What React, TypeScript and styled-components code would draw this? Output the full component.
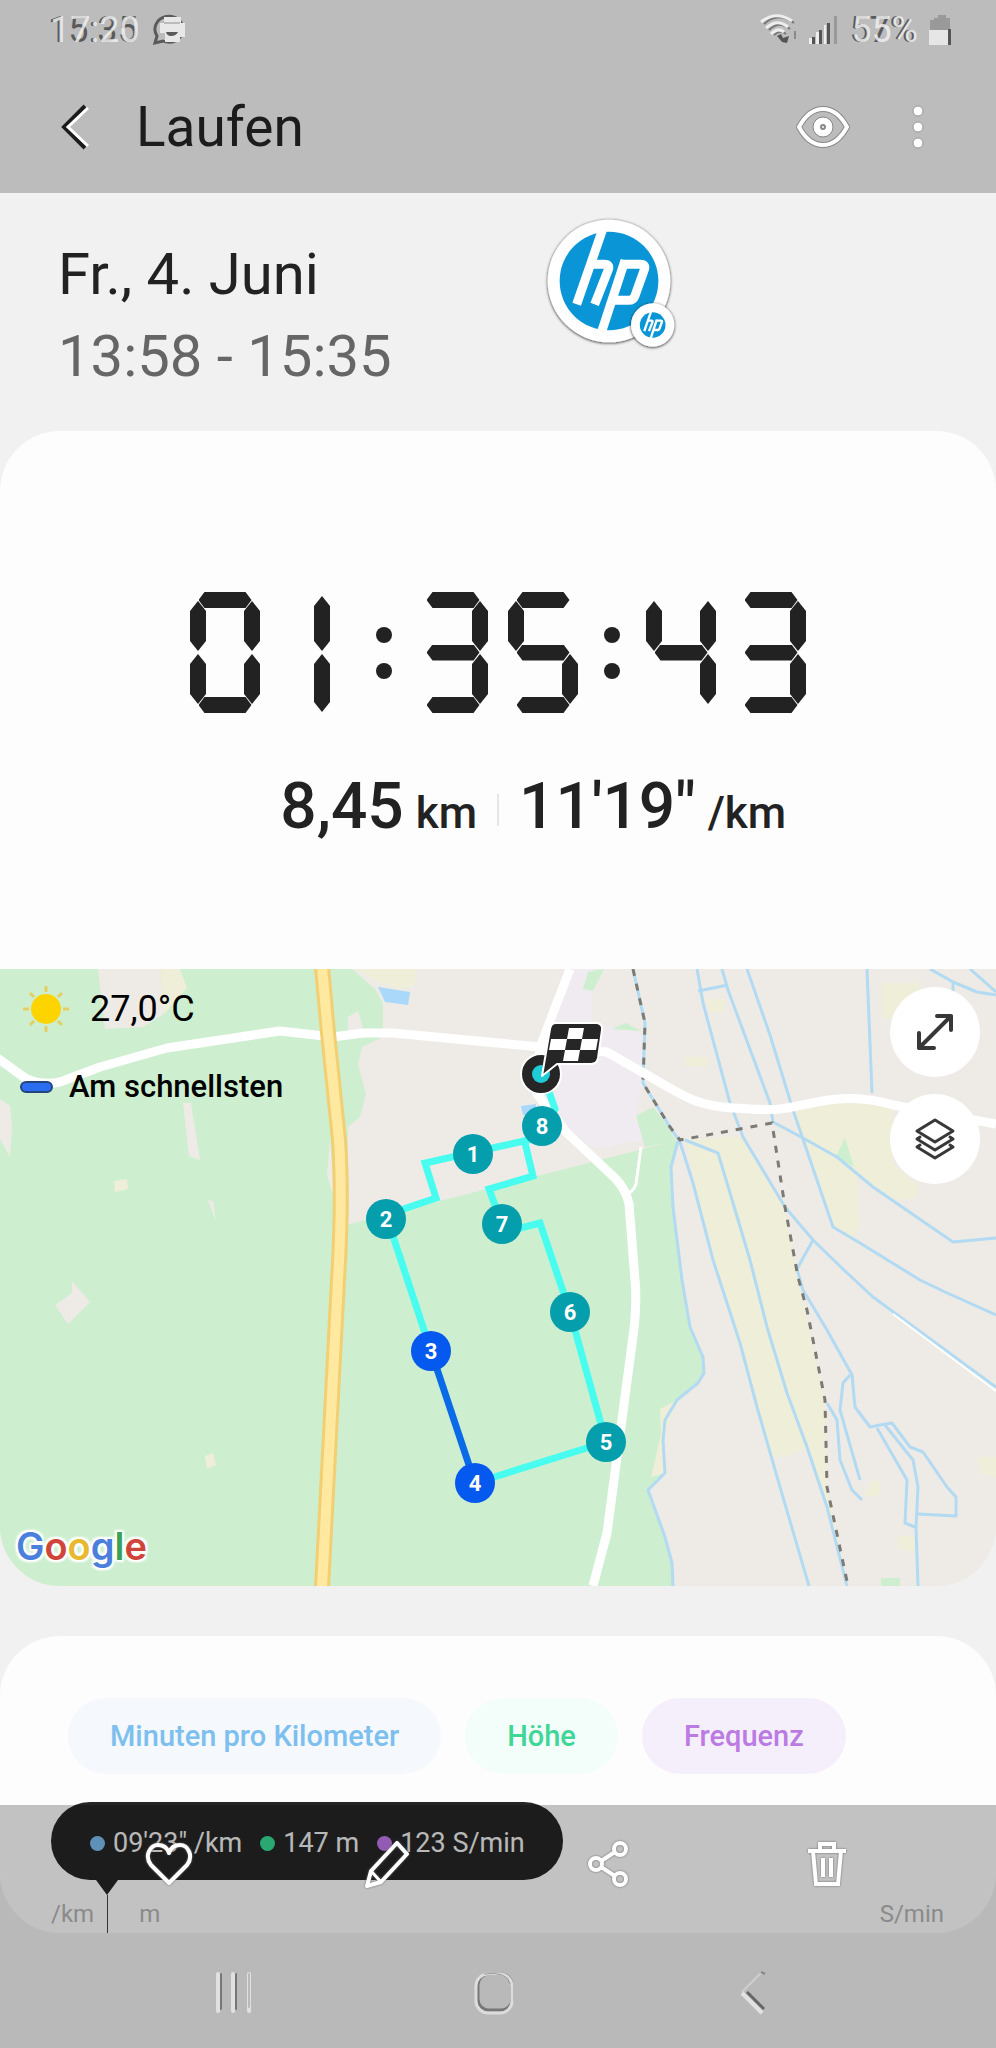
import React from 'react';
import styled, { createGlobalStyle } from 'styled-components';

const GlobalStyle = createGlobalStyle`
  * { box-sizing: border-box; }
  body {
    margin: 0;
    background: #f1f1f1;
    font-family: Roboto, "Liberation Sans", sans-serif;
    color: #222;
  }
  button { border: 0; padding: 0; background: none; font: inherit; cursor: pointer; }
  svg { display: block; }
`;

const Page = styled.div`
  min-height: 100vh;
  padding-bottom: 115px;
`;

/* Header */

const Header = styled.header`
  background: #bcbcbc;
`;

const StatusBar = styled.div`
  display: flex;
  align-items: center;
  height: 60px;
  padding: 0 44px 0 48px;
  font-size: 36px;
  line-height: 42px;
`;

const Ghosted = styled.span`
  display: grid;
`;

const GhostLayer = styled.span<{ $light?: boolean }>`
  grid-area: 1 / 1;
  margin-left: ${p => (p.$light ? '2px' : '0')};
  color: ${p => (p.$light ? 'rgba(240, 240, 240, 0.85)' : '#5a5a5a')};
`;

const StatusIcons = styled.div`
  display: flex;
  align-items: center;
  gap: 10px;
  margin-left: auto;
`;

const ChatIcon = styled.svg`
  margin-left: 12px;
`;

const AppBar = styled.div`
  display: flex;
  align-items: center;
  height: 133px;
  padding: 0 48px 0 46px;
`;

const IconButton = styled.button`
  display: grid;
  place-items: center;
  width: 60px;
  height: 60px;
`;

const Title = styled.h1`
  flex: 1;
  margin: 0 0 0 30px;
  font-size: 55px;
  line-height: 64px;
  font-weight: 400;
  color: #1c1c1c;
`;

const AppActions = styled.div`
  display: flex;
  gap: 35px;
`;

/* Date */

const DateBlock = styled.section`
  position: relative;
  padding: 40px 58px 34px;
  font-size: 58px;
  line-height: 82px;
`;

const DateLine = styled.div<{ $muted?: boolean }>`
  color: ${p => (p.$muted ? '#666' : '#222')};
`;

const FloatingBubble = styled.button`
  position: absolute;
  top: 20px;
  left: calc(50% + 43px);
`;

/* Summary */

const Summary = styled.section`
  display: flex;
  flex-direction: column;
  gap: 56px;
  padding: 161px 0 118px;
  background: #fdfdfd;
  border-radius: 60px 60px 0 0;
`;

const Clock = styled.div`
  display: flex;
  justify-content: center;
`;

const Digit = styled.span`
  display: grid;
  width: 70px;
  height: 121px;
  & + & { margin-left: 20px; }
`;

type SegmentName = 'a' | 'b' | 'c' | 'd' | 'e' | 'f' | 'g' | 'i' | 'j';

const segmentPlace: Record<SegmentName, string> = {
  a: 'align-self: start; justify-self: center;',
  g: 'align-self: center; justify-self: center;',
  d: 'align-self: end; justify-self: center;',
  f: 'align-self: start; justify-self: start; margin-top: 9px;',
  b: 'align-self: start; justify-self: end; margin-top: 9px;',
  e: 'align-self: end; justify-self: start; margin-bottom: 9px;',
  c: 'align-self: end; justify-self: end; margin-bottom: 9px;',
  i: 'align-self: start; height: 55px; margin: 4px 0 0 34px;',
  j: 'align-self: end; height: 58px; margin: 0 0 1px 34px;',
};

const Segment = styled.span<{ $name: SegmentName }>`
  grid-area: 1 / 1;
  background: #222;
  ${p =>
    'adg'.includes(p.$name)
      ? 'width: 53px; height: 16px; clip-path: polygon(0 50%, 6px 0, 47px 0, 100% 50%, 47px 100%, 6px 100%);'
      : 'width: 16px; height: 50px; clip-path: polygon(50% 0, 100% 10px, 100% calc(100% - 10px), 50% 100%, 0 calc(100% - 10px), 0 10px);'}
  ${p => segmentPlace[p.$name]}
`;

const Colon = styled.span`
  display: flex;
  flex-direction: column;
  justify-content: center;
  gap: 20px;
  margin: 0 26px;
`;

const ColonDot = styled.span`
  width: 16px;
  height: 16px;
  border-radius: 50%;
  background: #222;
`;

const Stats = styled.div`
  display: grid;
  grid-template-columns: 1fr 2px 1fr;
  column-gap: 20px;
  align-items: center;
  line-height: 76px;
  font-weight: 500;
`;

const Stat = styled.div<{ $right?: boolean }>`
  display: flex;
  align-items: baseline;
  gap: 12px;
  justify-content: ${p => (p.$right ? 'flex-end' : 'flex-start')};
`;

const StatValue = styled.span`
  font-size: 64px;
`;

const StatUnit = styled.span`
  font-size: 44px;
`;

const Divider = styled.span`
  height: 32px;
  background: #e6e6e6;
`;

/* Map */

const MapPanel = styled.section`
  position: relative;
  height: 617px;
  overflow: hidden;
  border-radius: 0 0 60px 60px;
  background: #eeebe6;
`;

const MapCanvas = styled.svg`
  width: 100%;
  height: 100%;
`;

const PinLabel = styled.text`
  font: 700 22px Roboto, sans-serif;
  fill: #fff;
  text-anchor: middle;
`;

const MapInfo = styled.div`
  position: absolute;
  top: 16px;
  left: 20px;
  display: flex;
  flex-direction: column;
  gap: 36px;
  color: #000;
`;

const Weather = styled.div`
  display: flex;
  align-items: center;
  gap: 18px;
  font-size: 36px;
  line-height: 42px;
`;

const Legend = styled.div`
  display: flex;
  align-items: center;
  gap: 16px;
  font-size: 31px;
  line-height: 36px;
  font-weight: 500;
`;

const LegendMark = styled.span`
  width: 33px;
  height: 12px;
  border: 2px solid #24447c;
  border-radius: 6px;
  background: #2b6df0;
`;

const MapButtons = styled.div`
  position: absolute;
  top: 18px;
  right: 16px;
  display: flex;
  flex-direction: column;
  gap: 17px;
`;

const RoundButton = styled.button`
  display: grid;
  place-items: center;
  width: 90px;
  height: 90px;
  border-radius: 50%;
  background: #fff;
`;

const MapBrand = styled.div`
  position: absolute;
  left: 16px;
  bottom: 17px;
  font: 600 38px/46px Inter, sans-serif;
  text-shadow: 0 0 3px #fff, 2px 2px 2px #fff, -2px -2px 2px #fff, 2px -2px 2px #fff, -2px 2px 2px #fff;
`;

const BrandLetter = styled.span<{ $color: string }>`
  color: ${p => p.$color};
`;

/* Chart card */

const ChartCard = styled.section`
  margin-top: 50px;
  padding-top: 62px;
  background: #fdfdfd;
  border-radius: 60px;
`;

const Chips = styled.div`
  display: flex;
  gap: 24px;
  padding: 0 68px;
  margin-bottom: 28px;
`;

const Chip = styled.button<{ $color: string; $background: string }>`
  height: 76px;
  padding: 0 42px;
  border-radius: 38px;
  font-size: 29px;
  font-weight: 500;
  white-space: nowrap;
  color: ${p => p.$color};
  background: ${p => p.$background};
`;

const Tooltip = styled.div`
  display: flex;
  align-items: center;
  gap: 18px;
  width: max-content;
  height: 78px;
  margin-left: 51px;
  padding: 4px 38px 0 39px;
  border-radius: 39px;
  background: #252525;
  color: #f0f0f0;
  font-size: 27px;
  line-height: 32px;
`;

const TooltipItem = styled.span`
  display: flex;
  align-items: center;
  gap: 8px;
`;

const Dot = styled.span<{ $color: string }>`
  width: 15px;
  height: 15px;
  border-radius: 50%;
  background: ${p => p.$color};
`;

const TooltipArrow = styled.div`
  width: 22px;
  height: 15px;
  margin-left: 96px;
  background: #252525;
  clip-path: polygon(0 0, 100% 0, 50% 100%);
`;

const Axis = styled.div`
  display: flex;
  align-items: center;
  height: 38px;
  padding: 0 52px 0 51px;
  font-size: 24px;
  line-height: 30px;
  color: #b4b4b4;
`;

const AxisLabel = styled.span<{ $grow?: boolean }>`
  ${p => p.$grow && 'flex: 1;'}
`;

const AxisCursor = styled.span`
  width: 1px;
  height: 38px;
  margin: 0 31px 0 13px;
  background: #444;
`;

/* Bottom bars */

const BottomBars = styled.footer`
  position: fixed;
  right: 0;
  bottom: 0;
  left: 0;
  background: rgba(0, 0, 0, 0.23);
`;

const Toolbar = styled.div`
  display: flex;
  justify-content: space-around;
  align-items: center;
  height: 118px;
  padding: 0 59px;
  svg { filter: drop-shadow(0 0 1px #666); }
`;

const NavBar = styled.nav`
  display: flex;
  justify-content: space-around;
  align-items: center;
  height: 125px;
  padding: 14px 113px 0 105px;
`;

const digitSegments: Record<string, string> = {
  '0': 'abcdef',
  '1': 'ij',
  '3': 'abcdg',
  '4': 'fgbc',
  '5': 'afgcd',
};

function SegmentClock({ value }: { value: string }) {
  return (
    <Clock role="img" aria-label={value}>
      {value.split('').map((char, index) =>
        char === ':' ? (
          <Colon key={index}>
            <ColonDot />
            <ColonDot />
          </Colon>
        ) : (
          <Digit key={index}>
            {digitSegments[char].split('').map(name => (
              <Segment key={name} $name={name as SegmentName} />
            ))}
          </Digit>
        ),
      )}
    </Clock>
  );
}

function HpMark() {
  return (
    <g fill="none" stroke="#fff" strokeWidth="27">
      <circle r="148" fill="#0a96d6" stroke="none" />
      <path d="M-20 -152L-97 70" />
      <path d="M-52 -50H-14Q4 -50 -2 -34L-43 70" />
      <path d="M48 -62L-22 152" />
      <path d="M40 -50H94Q112 -50 106 -34L78 44Q73 58 58 58H14" />
    </g>
  );
}

const pins = [
  { n: 1, x: 473, y: 185 },
  { n: 2, x: 386, y: 250 },
  { n: 3, x: 431, y: 382, fast: true },
  { n: 4, x: 475, y: 514, fast: true },
  { n: 5, x: 606, y: 473 },
  { n: 6, x: 570, y: 343 },
  { n: 7, x: 502, y: 255 },
  { n: 8, x: 542, y: 157 },
];

const streams = [
  '697,0 703,34 730,134 743,168 785,238 813,271 845,302 873,328 996,418',
  '722,0 728,21 770,134 773,153 803,169 837,188 873,218 953,273 996,269',
  '747,0 770,66 793,141 833,258 860,274 920,311 945,323 996,346',
  '698,22 728,16',
  '867,0 872,124',
  '930,0 953,13 977,23 996,26',
  '970,0 996,23',
  '953,13 953,22',
  '678,172 671,198 673,238 682,311 690,358 703,388 704,404 698,414 677,431 665,451 663,471 665,504 648,521 665,568 672,594 673,617',
  '680,173 693,214 713,291 740,374 757,438 780,518 809,617',
  '685,171 718,184 730,224 750,291 767,358 787,424 807,478 827,538 847,617',
  '813,271 797,300 803,321 827,361 852,406 855,438 870,458 880,456 892,454 910,478 923,483 947,518 956,528 956,547 918,545',
  '850,406 843,414 840,441 860,511',
  '827,434 837,451 840,491 852,521 862,531',
  '877,459 907,511 905,554 915,558',
  '885,456 913,491 918,518 916,558 918,617',
  '633,0 645,54 643,114 670,158 680,173',
];

function RouteMap() {
  return (
    <MapCanvas viewBox="0 0 996 617" preserveAspectRatio="xMidYMid slice" role="img" aria-label="Route">
      <rect width="996" height="617" fill="#eeebe6" />
      <path
        fill="#cdefcf"
        d="M0 0H352L375 20L383 34V68L362 78L358 95L366 125L360 148L348 158L346 256L670 173L679 172L671 198L673 238L682 311L690 358L703 388L703 404L698 414L677 431L665 451L663 471L665 504L648 521L665 568L672 594L673 617H0Z"
      />
      <g fill="#eeebe6">
        <path d="M98 0H160L164 45L143 58L105 60Z" />
        <path d="M0 130L10 137L12 158L10 188L0 170Z" />
        <path d="M183 134H191L200 191L189 187Z" />
        <path d="M72 312L90 333L68 355L55 336L72 324Z" />
        <path d="M348 48L358 42L363 60L348 62Z" />
        <path d="M330 170L334 230L327 206Z" />
        <path d="M208 231L213 232L216 253Z" />
      </g>
      <g fill="#eeeed9">
        <path d="M160 0H180L187 19L164 45Z" />
        <path d="M357 0H417L414 17L400 20L375 12Z" />
        <path d="M114 212L127 210L128 220L115 223Z" />
        <path d="M205 487L213 484L216 496L207 500Z" />
        <path d="M793 143L827 134L873 131L893 138V195L920 218L915 230H890L868 214L837 187L805 170Z" />
        <path d="M805 171L833 184L857 204L860 258L850 271L833 258Z" />
        <path d="M685 171L741 167L784 235L798 311L825 431L827 518L848 617L827 538L807 478L787 488H773L757 438L713 291Z" />
        <path d="M882 14H920V40L893 50H882Z" />
        <path d="M685 88H708V97H685Z" />
        <path d="M705 30H724V42L710 44Z" />
        <path d="M872 512H880V526L864 528Z" />
        <path d="M898 567H915V583L898 580Z" />
        <path d="M977 488H996V508L980 505Z" />
        <path d="M677 431L660 440L661 465L651 508L665 504L663 471Z" />
      </g>
      <path fill="#efebf0" d="M570 0H592V54L641 63L643 111L636 144L643 171L593 180L545 140L540 78Z" />
      <g fill="#cdefcf">
        <path d="M588 3L604 0L593 22L583 20Z" />
        <path d="M612 60L626 54L641 62Z" />
        <path d="M636 147L653 138L670 160L676 172L645 178Z" />
        <path d="M845 169L854 198L836 187Z" />
        <path d="M881 609H900V617H881Z" />
      </g>
      <path fill="#a9d8fb" d="M378 18L410 23L408 36L385 33ZM521 137L536 135V146H523Z" />
      <g fill="none" stroke="#b2daf2" strokeWidth="3" strokeLinejoin="round">
        {streams.map(points => (
          <polyline key={points} points={points} />
        ))}
      </g>
      <g fill="none" stroke="#7c7a74" strokeWidth="3" strokeDasharray="7 8">
        <path d="M633 0L645 54L643 114L670 158L680 171L772 154L785 238L798 308L807 341L825 431L827 518L848 617" />
      </g>
      <g fill="none" stroke="#fff" strokeWidth="9" strokeLinejoin="round">
        <path d="M-4 88L25 109Q42 117 60 113L100 98L167 79L280 62L333 68L363 64L393 64L540 78L607 83L640 102C680 124 690 136 733 139S780 141 807 135S860 126 893 136L996 155" />
        <path d="M570 0L540 78L537 125L567 164L615 209Q626 220 629 235L635 311Q637 330 634 360L626 420L607 564L593 617" />
        <path strokeWidth="3" d="M641 178L636 215Q633 224 626 224" />
        <path strokeWidth="2" d="M893 345L996 422" />
      </g>
      <g fill="none" strokeLinejoin="round">
        <path stroke="#f2cf72" strokeWidth="16" d="M322 -2L328 64L339 171Q343 230 338 311L322 619" />
        <path stroke="#ffe8a0" strokeWidth="10" d="M322 -2L328 64L339 171Q343 230 338 311L322 619" />
      </g>
      <g fill="none" strokeWidth="7" stroke="#48fdf0">
        <path d="M543 105L555 140L542 168L425 194L436 229L386 246L431 382" />
        <path d="M525 174L533 207L489 220L502 255L521 259L540 254L570 343L606 473L475 514" />
        <path stroke="#0a6be8" d="M431 382L475 514" />
      </g>
      {pins.map(pin => (
        <g key={pin.n}>
          <circle cx={pin.x} cy={pin.y} r="20" fill={pin.fast ? '#0659ee' : '#049eac'} />
          <PinLabel x={pin.x} y={pin.y + 8}>
            {pin.n}
          </PinLabel>
        </g>
      ))}
      <circle cx="541" cy="105" r="20" fill="#262626" stroke="#fff" strokeWidth="2" />
      <circle cx="541" cy="105" r="9" fill="#1fcbd6" />
      <path
        fill="#262626"
        stroke="#fff"
        strokeWidth="2"
        strokeLinejoin="round"
        d="M556 54H597Q603 55 602 61L598 89Q597 95 591 95H557L542 107L550 60Q551 54 556 54Z"
      />
      <path
        fill="#fff"
        d="M569 59H584L582 70H567ZM551 70H567L565 81H549ZM582 70H598L596 81H580ZM565 81H580L578 92H563Z"
      />
    </MapCanvas>
  );
}

const brand: [string, string][] = [
  ['G', '#4a80dc'],
  ['o', '#d0453a'],
  ['o', '#e8b92e'],
  ['g', '#4a80dc'],
  ['l', '#3aa257'],
  ['e', '#d0453a'],
];

export default function App() {
  return (
    <Page>
      <GlobalStyle />
      <Header>
        <StatusBar>
          <Ghosted>
            <GhostLayer>15:35</GhostLayer>
            <GhostLayer $light aria-hidden="true">17:20</GhostLayer>
          </Ghosted>
          <ChatIcon width="36" height="34" viewBox="0 0 36 34" fill="none">
            <path d="M3 30L5 23A14 13 0 1 1 11 28Z" stroke="#5a5a5a" strokeWidth="3" />
            <path d="M12 4H29V10H33V24H28V29H13V20H8V10H12Z" fill="#e8e8e8" />
            <path d="M14 19H26Q24 23 19 23Q15 23 14 19Z" fill="#5a5a5a" />
            <path d="M12 10H28" stroke="#bbb" strokeWidth="2" />
          </ChatIcon>
          <StatusIcons>
            <svg width="40" height="32" viewBox="0 0 40 32" fill="none">
              <g stroke="#777" strokeWidth="2">
                <path d="M5 10Q19 -3 35 9M10 16Q20 6 31 15M15 21Q21 15 27 20" />
              </g>
              <g stroke="#eee" strokeWidth="3">
                <path d="M2 8Q17 -4 33 7M7 14Q18 4 29 13M12 20Q19 13 25 18" />
              </g>
              <path d="M18 22L22 20L24 24L30 22L28 29L23 28Z" fill="#555" />
              <path d="M36 17V25" stroke="#8a8a8a" strokeWidth="2" />
            </svg>
            <svg width="30" height="30" viewBox="0 0 30 30">
              <path fill="#eee" d="M0 23H3V29H0ZM7 17H10V29H7ZM15 10H17V29H15Z" />
              <path fill="#555" d="M3 22H6V29H3ZM10 15H13V29H10ZM18 8H21V29H18Z" />
              <path fill="#999" d="M25 1H28V29H25Z" />
            </svg>
            <Ghosted>
              <GhostLayer>57%</GhostLayer>
              <GhostLayer $light aria-hidden="true">55%</GhostLayer>
            </Ghosted>
            <svg width="24" height="32" viewBox="0 0 24 32">
              <path fill="#999" d="M6 4H18V1H10V4H22V17H2V6H6Z" />
              <path fill="#e6e6e6" d="M1 16H20V31H1Z" />
              <path fill="#555" d="M20 15H23V31H20Z" />
            </svg>
          </StatusIcons>
        </StatusBar>
        <AppBar>
          <IconButton aria-label="Zurück">
            <svg width="32" height="48" viewBox="0 0 32 48" fill="none">
              <path d="M25 3L4 24L25 45" stroke="#1c1c1c" strokeWidth="4" />
              <path d="M28 5L8 24L28 43" stroke="#fff" strokeWidth="3" />
            </svg>
          </IconButton>
          <Title>Laufen</Title>
          <AppActions>
            <IconButton aria-label="Anzeigen">
              <svg width="54" height="42" viewBox="0 0 54 42" fill="none">
                <path d="M3 21C16 -3 38 -3 51 21C38 45 16 45 3 21Z" stroke="#888" strokeWidth="6" />
                <path d="M3 21C16 -3 38 -3 51 21C38 45 16 45 3 21Z" stroke="#fff" strokeWidth="4" />
                <circle cx="27" cy="21" r="10" fill="#fff" stroke="#888" />
                <circle cx="27" cy="21" r="2" stroke="#888" strokeWidth="2" />
              </svg>
            </IconButton>
            <IconButton aria-label="Weitere Optionen">
              <svg width="14" height="46" viewBox="0 0 14 46" fill="#fff" stroke="#999">
                <circle cx="7" cy="7" r="5" />
                <circle cx="7" cy="23" r="5" />
                <circle cx="7" cy="39" r="5" />
              </svg>
            </IconButton>
          </AppActions>
        </AppBar>
      </Header>

      <DateBlock>
        <DateLine>Fr., 4. Juni</DateLine>
        <DateLine $muted>13:58 - 15:35</DateLine>
        <FloatingBubble aria-label="HP">
          <svg width="142" height="142" viewBox="-204 -204 426 426">
            <defs>
              <filter id="bubble-shadow" x="-20%" y="-20%" width="140%" height="140%">
                <feDropShadow dx="0" dy="2" stdDeviation="5" floodColor="#000" floodOpacity="0.9" />
              </filter>
            </defs>
            <circle r="184" fill="#fff" filter="url(#bubble-shadow)" />
            <HpMark />
            <circle cx="131" cy="132" r="65" fill="#fff" filter="url(#bubble-shadow)" />
            <g transform="translate(131 132) scale(0.26)">
              <HpMark />
            </g>
          </svg>
        </FloatingBubble>
      </DateBlock>

      <Summary>
        <SegmentClock value="01:35:43" />
        <Stats>
          <Stat $right>
            <StatValue>8,45</StatValue>
            <StatUnit>km</StatUnit>
          </Stat>
          <Divider />
          <Stat>
            <StatValue>11'19"</StatValue>
            <StatUnit>/km</StatUnit>
          </Stat>
        </Stats>
      </Summary>

      <MapPanel>
        <RouteMap />
        <MapInfo>
          <Weather>
            <svg width="52" height="48" viewBox="-26 -24 52 48">
              <path
                stroke="#e3cf62"
                strokeWidth="3"
                d="M0 -23V-17M0 17V23M-23 0H-17M17 0H23M-16 -16L-12 -12M12 12L16 16M-16 16L-12 12M12 -12L16 -16"
              />
              <circle r="15" fill="#fdd400" />
            </svg>
            <span>27,0°C</span>
          </Weather>
          <Legend>
            <LegendMark />
            <span>Am schnellsten</span>
          </Legend>
        </MapInfo>
        <MapButtons>
          <RoundButton aria-label="Karte vergrößern">
            <svg width="38" height="38" viewBox="0 0 38 38" fill="none" stroke="#383838" strokeWidth="4">
              <path d="M3 35L35 3M21 3H35V17M3 20V35H18" strokeLinecap="round" strokeLinejoin="round" />
            </svg>
          </RoundButton>
          <RoundButton aria-label="Kartentyp">
            <svg width="42" height="42" viewBox="0 0 42 42" fill="none" stroke="#383838" strokeWidth="3" strokeLinejoin="round" strokeLinecap="round">
              <path d="M21 2L39 13L21 24L3 13Z" />
              <path d="M6 19L3 21L21 32L39 21L36 19" />
              <path d="M6 27L3 29L21 40L39 29L36 27" />
            </svg>
          </RoundButton>
        </MapButtons>
        <MapBrand>
          {brand.map(([letter, color], index) => (
            <BrandLetter key={index} $color={color}>
              {letter}
            </BrandLetter>
          ))}
        </MapBrand>
      </MapPanel>

      <ChartCard>
        <Chips>
          <Chip $color="#7dbfee" $background="#f5f8fc">Minuten pro Kilometer</Chip>
          <Chip $color="#3fd698" $background="#f3fdfa">Höhe</Chip>
          <Chip $color="#bb7be3" $background="#f5effc">Frequenz</Chip>
        </Chips>
        <Tooltip>
          <TooltipItem>
            <Dot $color="#7bbcf0" />
            09'23" /km
          </TooltipItem>
          <TooltipItem>
            <Dot $color="#36dc94" />
            147 m
          </TooltipItem>
          <TooltipItem>
            <Dot $color="#bf78ea" />
            123 S/min
          </TooltipItem>
        </Tooltip>
        <TooltipArrow />
        <Axis>
          <AxisLabel>/km</AxisLabel>
          <AxisCursor />
          <AxisLabel $grow>m</AxisLabel>
          <AxisLabel>S/min</AxisLabel>
        </Axis>
      </ChartCard>

      <BottomBars>
        <Toolbar>
          <IconButton aria-label="Favorit">
            <svg width="48" height="44" viewBox="0 0 48 44" fill="none" stroke="#fff" strokeWidth="4" strokeLinejoin="round">
              <path d="M24 41L6 23C-1 14 5 3 13 3C18 3 22 5 24 11C26 5 30 3 35 3C43 3 49 14 42 23Z" />
            </svg>
          </IconButton>
          <IconButton aria-label="Bearbeiten">
            <svg width="48" height="50" viewBox="0 0 48 50" fill="none" stroke="#fff" strokeWidth="4" strokeLinejoin="round">
              <path d="M3 47L7 32L33 4L43 15L17 43Z" />
              <path d="M7 32L17 43" strokeWidth="3" />
            </svg>
          </IconButton>
          <IconButton aria-label="Teilen">
            <svg width="42" height="48" viewBox="0 0 42 48" fill="none" stroke="#fff" strokeWidth="4">
              <circle cx="9" cy="24" r="6" />
              <circle cx="33" cy="9" r="6" />
              <circle cx="33" cy="39" r="6" />
              <path d="M14 21L28 12M14 27L28 36" />
            </svg>
          </IconButton>
          <IconButton aria-label="Löschen">
            <svg width="40" height="48" viewBox="0 0 40 48" fill="none" stroke="#fff" strokeWidth="4">
              <path d="M1 11H39M13 11V4H27V11M6 11L9 44H31L34 11" />
              <path d="M16 18V37M24 18V37" />
            </svg>
          </IconButton>
        </Toolbar>
        <NavBar>
          <IconButton aria-label="Letzte Apps">
            <svg width="40" height="44" viewBox="0 0 40 44" fill="none" strokeLinecap="round">
              <path d="M3 3V40M18 3V40M34 3V40" stroke="#e0e0e0" strokeWidth="4" />
              <path d="M6 3V38M21 3V38" stroke="#777" strokeWidth="2" />
              <path d="M34 3V36" stroke="#bababa" strokeWidth="2" />
            </svg>
          </IconButton>
          <IconButton aria-label="Startbildschirm">
            <svg width="44" height="46" viewBox="0 0 44 46" fill="none">
              <rect x="6" y="4" width="34" height="36" rx="11" stroke="#777" strokeWidth="3" />
              <rect x="4" y="4" width="36" height="39" rx="12" stroke="#dcdcdc" strokeWidth="3" />
              <path d="M12 4Q36 1 38 14" stroke="#999" />
            </svg>
          </IconButton>
          <IconButton aria-label="Zurück">
            <svg width="28" height="44" viewBox="0 0 28 44" fill="none">
              <path d="M22 2L3 21" stroke="#cecece" strokeWidth="2" />
              <path d="M22 1L26 3" stroke="#888" strokeWidth="2" />
              <path d="M3 22L23 42" stroke="#e2e2e2" strokeWidth="4" />
              <path d="M8 21L25 38" stroke="#666" strokeWidth="3" />
            </svg>
          </IconButton>
        </NavBar>
      </BottomBars>
    </Page>
  );
}
